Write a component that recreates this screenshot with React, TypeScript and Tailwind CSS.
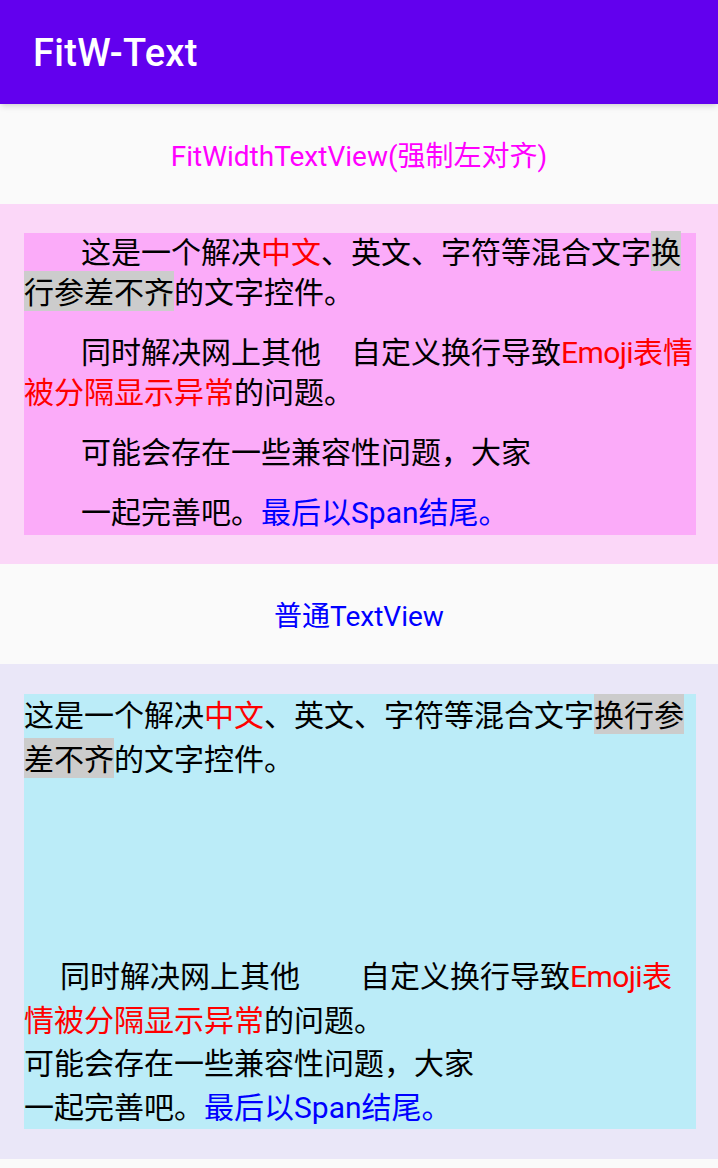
const red = "text-[#ff0000]";
const blue = "text-[#0000ff]";
const gray = "bg-[#cccccc] pt-[4px] pb-[1px]";

const FitParagraph = ({ children }: { children: React.ReactNode }) => (
  <p className="indent-[57px] leading-[40px]">{children}</p>
);

const App = () => {
  return (
    <div
      className="min-h-[1168px] bg-[#fafafa] text-black"
      style={{ fontFamily: 'Roboto, "Noto Sans CJK SC", sans-serif' }}
    >
      <header className="relative z-10 h-[104px] bg-[#6200ee] px-[33px] flex items-center shadow-md">
        <h1 className="text-[38px] font-medium text-white tracking-[0.3px] pt-[2px]">FitW-Text</h1>
      </header>

      <div className="h-[100px] flex items-center justify-center pt-[6px]">
        <span className="text-[28px] text-[#ff00ff]">FitWidthTextView(强制左对齐)</span>
      </div>

      <section className="bg-[#fbd7f8] pl-[24px] pr-[22px] py-[29px]">
        <div className="bg-[#fbabf9] text-[30px] flex flex-col gap-[20px] pb-[2px]">
          <FitParagraph>
            这是一个解决<span className={red}>中文</span>、英文、字符等混合文字
            <span className={gray}>换行参差不齐</span>的文字控件。
          </FitParagraph>
          <FitParagraph>
            同时解决网上其他{"\u3000"}自定义换行导致
            <span className={red}>
              <span className="tracking-[-0.6px]">Emoji</span>表情被分隔显示异常
            </span>
            的问题。
          </FitParagraph>
          <FitParagraph>可能会存在一些兼容性问题，大家</FitParagraph>
          <FitParagraph>
            一起完善吧。<span className={blue}>最后以Span结尾。</span>
          </FitParagraph>
        </div>
      </section>

      <div className="h-[100px] flex items-center justify-center pt-[6px]">
        <span className="text-[28px] text-[#0000ff]">普通TextView</span>
      </div>

      <section className="bg-[#eae7f8] pl-[24px] pr-[22px] pt-[30px] pb-[30px]">
        <div className="bg-[#bbecf8] text-[30px] leading-[43.5px]">
          <p>
            这是一个解决<span className={red}>中文</span>、英文、字符等混合文字
            <span className={gray}>换行参差不齐</span>的文字控件。
          </p>
          <div className="h-[174px]" />
          <p>
            <span className="inline-block w-[36px]" />
            同时解决网上其他{"\u3000\u3000"}自定义换行导致
            <span className={red}>
              <span className="tracking-[-0.6px]">Emoji</span>表情被分隔显示异常
            </span>
            的问题。
          </p>
          <p>可能会存在一些兼容性问题，大家</p>
          <p>
            一起完善吧。<span className={blue}>最后以Span结尾。</span>
          </p>
        </div>
      </section>
    </div>
  );
};

export default App;
